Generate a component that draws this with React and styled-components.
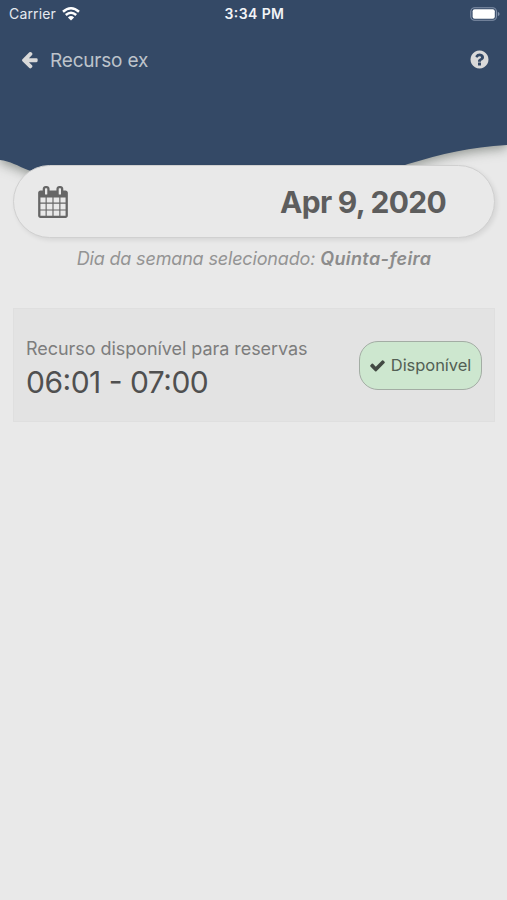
import React, { useState } from 'react';

import styled, { createGlobalStyle } from 'styled-components';

const App = () => {
  const [reservas] = useState([
    { id: 1, titulo: 'Recurso disponível para reservas', horario: '06:01 - 07:00', estado: 'Disponível' },
  ]);

  return (
    <>
      <GlobalStyle />
      <Pantalla>
        <Cabecera>
          <Ola viewBox="0 0 507 190" aria-hidden="true">
            <path d="M0 0H507V145C470 147 442 154 408 164C350 184 290 190 225 190C150 190 85 190 28 170C18 166 10 161 0 160Z" />
          </Ola>
          <BarraEstado>
            <Operador>
              Carrier
              <IconoWifi />
            </Operador>
            <Hora>3:34 PM</Hora>
            <IconoBateria />
          </BarraEstado>
          <Navegacion>
            <BotonIcono aria-label="Voltar">
              <IconoFlecha />
            </BotonIcono>
            <Titulo>Recurso ex</Titulo>
            <BotonIcono aria-label="Ajuda">
              <IconoAyuda />
            </BotonIcono>
          </Navegacion>
        </Cabecera>
        <Contenido>
          <SelectorFecha>
            <IconoCalendario />
            <Fecha>Apr 9, 2020</Fecha>
          </SelectorFecha>
          <DiaSemana>
            Dia da semana selecionado: <strong>Quinta-feira</strong>
          </DiaSemana>
          {reservas.map((reserva) => (
            <Tarjeta key={reserva.id}>
              <Detalle>
                <Descripcion>{reserva.titulo}</Descripcion>
                <Horario>{reserva.horario}</Horario>
              </Detalle>
              <BotonEstado>
                <IconoCheck />
                {reserva.estado}
              </BotonEstado>
            </Tarjeta>
          ))}
        </Contenido>
      </Pantalla>
    </>
  );
};
export default App;

const IconoWifi = () => (
  <svg width="18" height="14" viewBox="0 0 18 14" fill="none" stroke="#fff" strokeWidth="2.5">
    <path d="M1 4.8Q9-2.2 17 4.8" />
    <path d="M3.8 8Q9 3.5 14.2 8" />
    <path d="M9 13.6L5.9 10.4Q9 7.8 12.1 10.4Z" fill="#fff" stroke="none" />
  </svg>
);

const IconoBateria = () => (
  <svg width="30" height="14" viewBox="0 0 30 14">
    <rect x="0.8" y="0.8" width="25.6" height="12.4" rx="3.8" fill="none" stroke="#8493ab" strokeWidth="1.1" />
    <rect x="2.6" y="2.3" width="22.2" height="9.4" rx="2" fill="#fff" />
    <path d="M27.8 4.8Q29.6 5.6 29.6 7T27.8 9.2Z" fill="#8493ab" />
  </svg>
);

const IconoFlecha = () => (
  <svg width="19" height="19" viewBox="0 0 1792 1792" fill="currentColor">
    <path d="M1664 896v128q0 53-32.5 90.5t-84.5 37.5h-704l293 294q38 36 38 90t-38 90l-75 76q-37 37-90 37-52 0-91-37l-651-652q-37-37-37-90 0-52 37-91l651-650q38-38 91-38 52 0 90 38l75 74q38 38 38 91t-38 91l-293 293h704q52 0 84.5 37.5t32.5 90.5z" />
  </svg>
);

const IconoAyuda = () => (
  <svg width="21" height="21" viewBox="0 0 1792 1792" fill="currentColor">
    <path d="M1024 1376v-192q0-14-9-23t-23-9h-192q-14 0-23 9t-9 23v192q0 14 9 23t23 9h192q14 0 23-9t9-23zm256-672q0-88-55.5-163t-138.5-116-170-41q-243 0-371 213-15 24 8 42l132 100q7 6 19 6 16 0 25-12 53-68 86-92 34-24 86-24 48 0 85.5 26t37.5 59q0 38-20 61t-68 45q-63 28-115.5 86.5t-52.5 125.5v36q0 14 9 23t23 9h192q14 0 23-9t9-23q0-19 21.5-49.5t54.5-49.5q32-18 49-28.5t46-35 44.5-48 28-60.5 12.5-81zm384 192q0 209-103 385.5t-279.5 279.5-385.5 103-385.5-103-279.5-279.5-103-385.5 103-385.5 279.5-279.5 385.5-103 385.5 103 279.5 279.5 103 385.5z" />
  </svg>
);

const IconoCalendario = () => (
  <svg width="30" height="32" viewBox="0 0 1664 1792" fill="#666">
    <path d="M128 1664h288v-288h-288v288zM480 1664h320v-288h-320v288zM128 1312h288v-320h-288v320zM480 1312h320v-320h-320v320zM128 928h288v-288h-288v288zM864 1664h320v-288h-320v288zM480 928h320v-288h-320v288zM1248 1664h288v-288h-288v288zM864 1312h320v-320h-320v320zM512 448v-288q0-13-9.5-22.5t-22.5-9.5h-64q-13 0-22.5 9.5t-9.5 22.5v288q0 13 9.5 22.5t22.5 9.5h64q13 0 22.5-9.5t9.5-22.5zM1248 1312h288v-320h-288v320zM864 928h320v-288h-320v288zM1248 928h288v-288h-288v288zM1280 448v-288q0-13-9.5-22.5t-22.5-9.5h-64q-13 0-22.5 9.5t-9.5 22.5v288q0 13 9.5 22.5t22.5 9.5h64q13 0 22.5-9.5t9.5-22.5zM1664 384v1280q0 52-38 90t-90 38h-1408q-52 0-90-38t-38-90v-1280q0-52 38-90t90-38h128v-96q0-66 47-113t113-47h64q66 0 113 47t47 113v96h384v-96q0-66 47-113t113-47h64q66 0 113 47t47 113v96h128q52 0 90 38t38 90z" />
  </svg>
);

const IconoCheck = () => (
  <svg width="17" height="17" viewBox="0 0 1792 1792" fill="#424a43">
    <path d="M1671 566q0 40-28 68l-724 724-136 136q-28 28-68 28t-68-28l-136-136-362-362q-28-28-28-68t28-68l136-136q28-28 68-28t68 28l294 295 656-657q28-28 68-28t68 28l136 136q28 28 28 68z" />
  </svg>
);

const GlobalStyle = createGlobalStyle`
  body {
    margin: 0;
    background: #e9e9e9;
    font-family: Inter, "Liberation Sans", sans-serif;
  }
  * {
    box-sizing: border-box;
  }
  svg {
    display: block;
    flex: none;
  }
`;

const Pantalla = styled.div`
  display: flex;
  flex-direction: column;
  min-height: 900px;
  background: #e9e9e9;
`;

const Cabecera = styled.header`
  position: relative;
  height: 165px;
  color: #cfd1d4;
`;

const Ola = styled.svg`
  position: absolute;
  top: 0;
  left: 0;
  width: 100%;
  height: 190px;
  overflow: visible;
  fill: #344966;
  filter: drop-shadow(0 3px 6px rgba(50, 60, 50, 0.5));
`;

const BarraEstado = styled.div`
  position: relative;
  display: grid;
  grid-template-columns: 1fr auto 1fr;
  align-items: center;
  height: 27px;
  padding: 0 7px 0 9px;

  > svg {
    justify-self: end;
  }
`;

const Operador = styled.div`
  display: flex;
  align-items: center;
  gap: 6px;
  color: #e6eaf0;
  font-size: 14px;
  letter-spacing: 0.15px;
`;

const Hora = styled.div`
  color: #f2f4f7;
  font-size: 14px;
  font-weight: 600;
  font-feature-settings: "case";
  letter-spacing: 0.4px;
`;

const Navegacion = styled.nav`
  position: relative;
  display: flex;
  align-items: center;
  height: 65px;
  padding: 0 17px 0 20px;
`;

const BotonIcono = styled.button`
  padding: 0;
  border: none;
  background: none;
  color: #d9d9d9;
  cursor: pointer;
`;

const Titulo = styled.h1`
  flex: 1;
  margin: 0 0 0 11px;
  padding-top: 2px;
  color: #bdc3cb;
  font-size: 19px;
  font-weight: 400;
  line-height: 24px;
  letter-spacing: -0.2px;
`;

const Contenido = styled.main`
  position: relative;
  padding: 0 12px 0 13px;
`;

const SelectorFecha = styled.div`
  display: flex;
  align-items: center;
  justify-content: space-between;
  height: 73px;
  padding: 0 48px 0 24px;
  border: 1px solid #d0d0d0;
  border-radius: 37px;
  background: #e9e9e9;
  box-shadow: 2px 2px 5px rgba(0, 0, 0, 0.09);
`;

const Fecha = styled.span`
  color: #5d5d5d;
  font-size: 30px;
  font-weight: 700;
  letter-spacing: -0.7px;
`;

const DiaSemana = styled.p`
  margin: 9px 0 37px;
  color: #949494;
  font-size: 18px;
  font-style: italic;
  line-height: 24px;
  letter-spacing: -0.16px;
  text-align: center;
  white-space: nowrap;

  strong {
    color: #8c8c8c;
    font-weight: 600;
    letter-spacing: 0.4px;
  }
`;

const Tarjeta = styled.section`
  display: flex;
  align-items: center;
  justify-content: space-between;
  height: 114px;
  padding: 0 12px;
  border: 1px solid #dfdfdf;
  background: #e3e3e3;
`;

const Detalle = styled.div`
  display: flex;
  flex-direction: column;
  padding-top: 8px;
`;

const Descripcion = styled.span`
  color: #7d7d7d;
  font-size: 18px;
  line-height: 26px;
  letter-spacing: -0.05px;
`;

const Horario = styled.span`
  color: #505050;
  font-size: 30px;
  line-height: 40px;
  font-feature-settings: "case";
  letter-spacing: -0.5px;
`;

const BotonEstado = styled.button`
  display: flex;
  align-items: center;
  justify-content: center;
  gap: 5px;
  width: 123px;
  height: 49px;
  padding: 0 1px 0 0;
  border: 1px solid #a3ada4;
  border-radius: 19px;
  background: #cde7cf;
  color: #536054;
  font-family: inherit;
  font-size: 16.5px;
  letter-spacing: -0.05px;
  cursor: pointer;
`;
